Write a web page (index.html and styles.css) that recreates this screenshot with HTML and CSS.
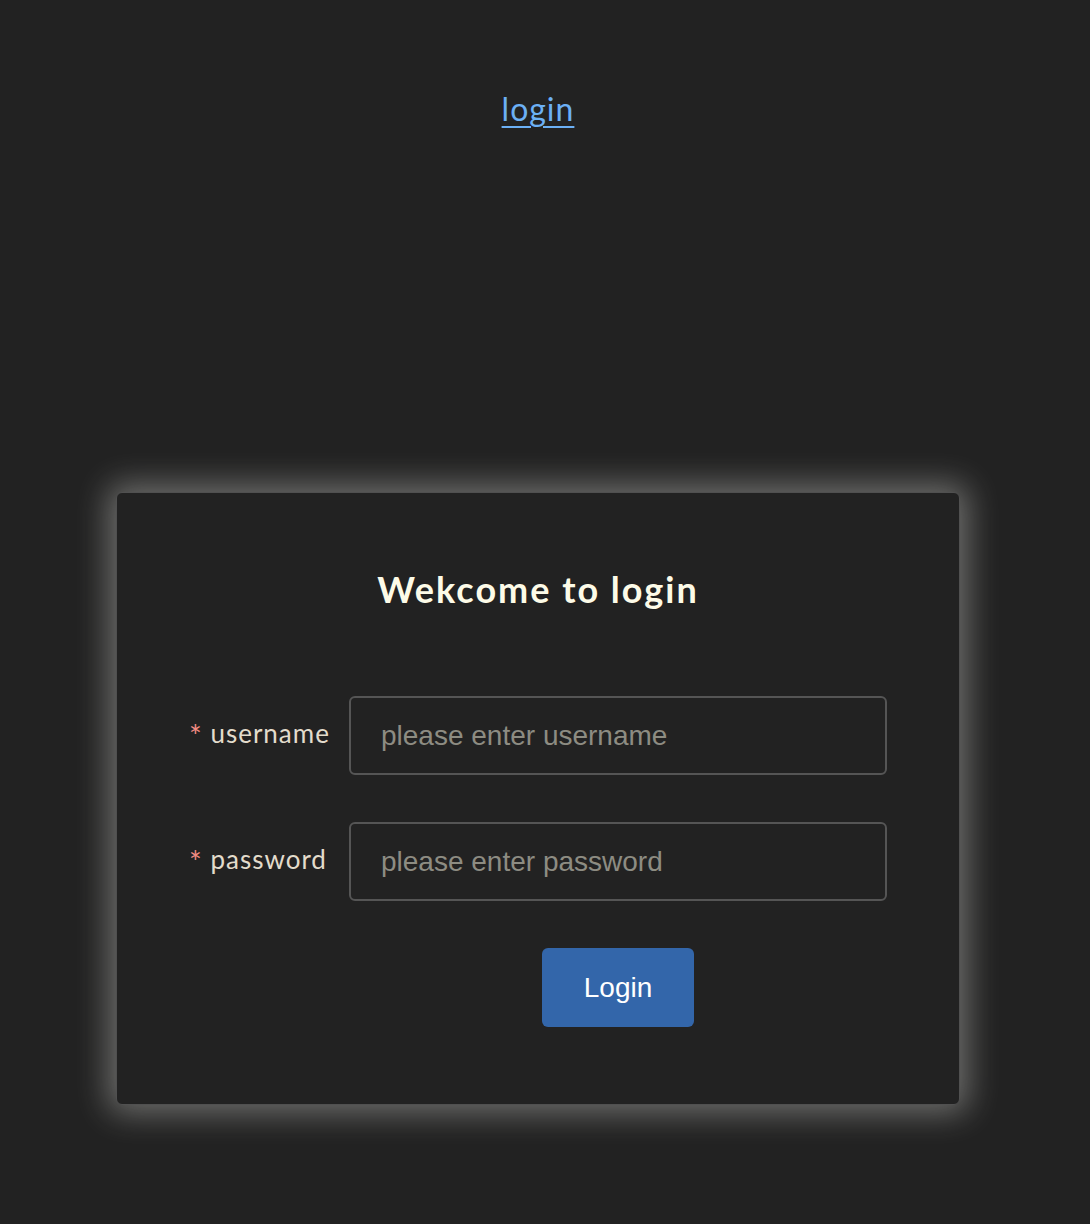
FILE: index.html
```html
<!DOCTYPE html>
<html>
<head>
<meta charset="utf-8">
<link rel="stylesheet" href="styles.css">
</head>
<body>
<div class="page">
  <div class="top"><a class="top-link" href="#">login</a></div>
  <div class="card">
    <h1 class="title">Wekcome to login</h1>
    <form class="form">
      <div class="row">
        <label class="label"><span class="req">*</span> username</label>
        <input class="input" type="text" placeholder="please enter username">
      </div>
      <div class="row">
        <label class="label"><span class="req">*</span> password</label>
        <input class="input" type="password" placeholder="please enter password">
      </div>
      <div class="row">
        <span class="label"></span>
        <div class="btn-wrap"><button class="btn" type="button">Login</button></div>
      </div>
    </form>
  </div>
</div>
</body>
</html>
```
FILE: styles.css
```css
html, body {
  margin: 0;
  padding: 0;
  background: #222222;
}
body {
  width: 1076px;
  height: 1224px;
  font-family: "Lato", "Noto Sans", sans-serif;
}
.page {
  display: flex;
  flex-direction: column;
  align-items: center;
  padding-top: 88px;
}
.top {
  height: 40px;
  display: flex;
  align-items: center;
}
.top-link {
  color: #6cb0f5;
  font-size: 32px;
  letter-spacing: 1px;
  text-decoration: underline;
  text-underline-offset: 5px;
  text-decoration-thickness: 2px;
}
.card {
  margin-top: 364px;
  width: 844px;
  box-sizing: border-box;
  height: 613px;
  border: 1px solid #505050;
  border-radius: 6px;
  background: #222222;
  box-shadow: 0 0 32px 8px rgba(205, 205, 200, 0.45);
  padding: 72px 72px 0 72px;
}
.title {
  margin: 0;
  text-align: center;
  color: #fdfbe8;
  font-size: 36px;
  letter-spacing: 2px;
  font-weight: 700;
  line-height: 48px;
}
.form {
  margin-top: 83px;
  display: flex;
  flex-direction: column;
  gap: 47px;
}
.row {
  display: flex;
  align-items: center;
}
.label {
  width: 160px;
  flex: none;
  color: #e3dccc;
  font-size: 26px;
  letter-spacing: 1px;
  margin-top: -1px;
}
.req {
  color: #f28b82;
  font-size: 30px;
  vertical-align: -4px;
}
.input {
  width: 539px;
  height: 79px;
  box-sizing: border-box;
  background: #222222;
  border: 2px solid #555555;
  border-radius: 6px;
  padding: 0 30px;
  font-family: "Liberation Sans", Arial, sans-serif;
  font-size: 28px;
  color: #ddd;
  outline: none;
}
.input::placeholder {
  color: #8d8c82;
}
.btn-wrap {
  width: 539px;
  display: flex;
  justify-content: center;
}
.btn {
  width: 152px;
  height: 79px;
  background: #3366aa;
  border: none;
  border-radius: 6px;
  color: #ffffff;
  font-family: "Liberation Sans", Arial, sans-serif;
  font-size: 28px;
}
```
